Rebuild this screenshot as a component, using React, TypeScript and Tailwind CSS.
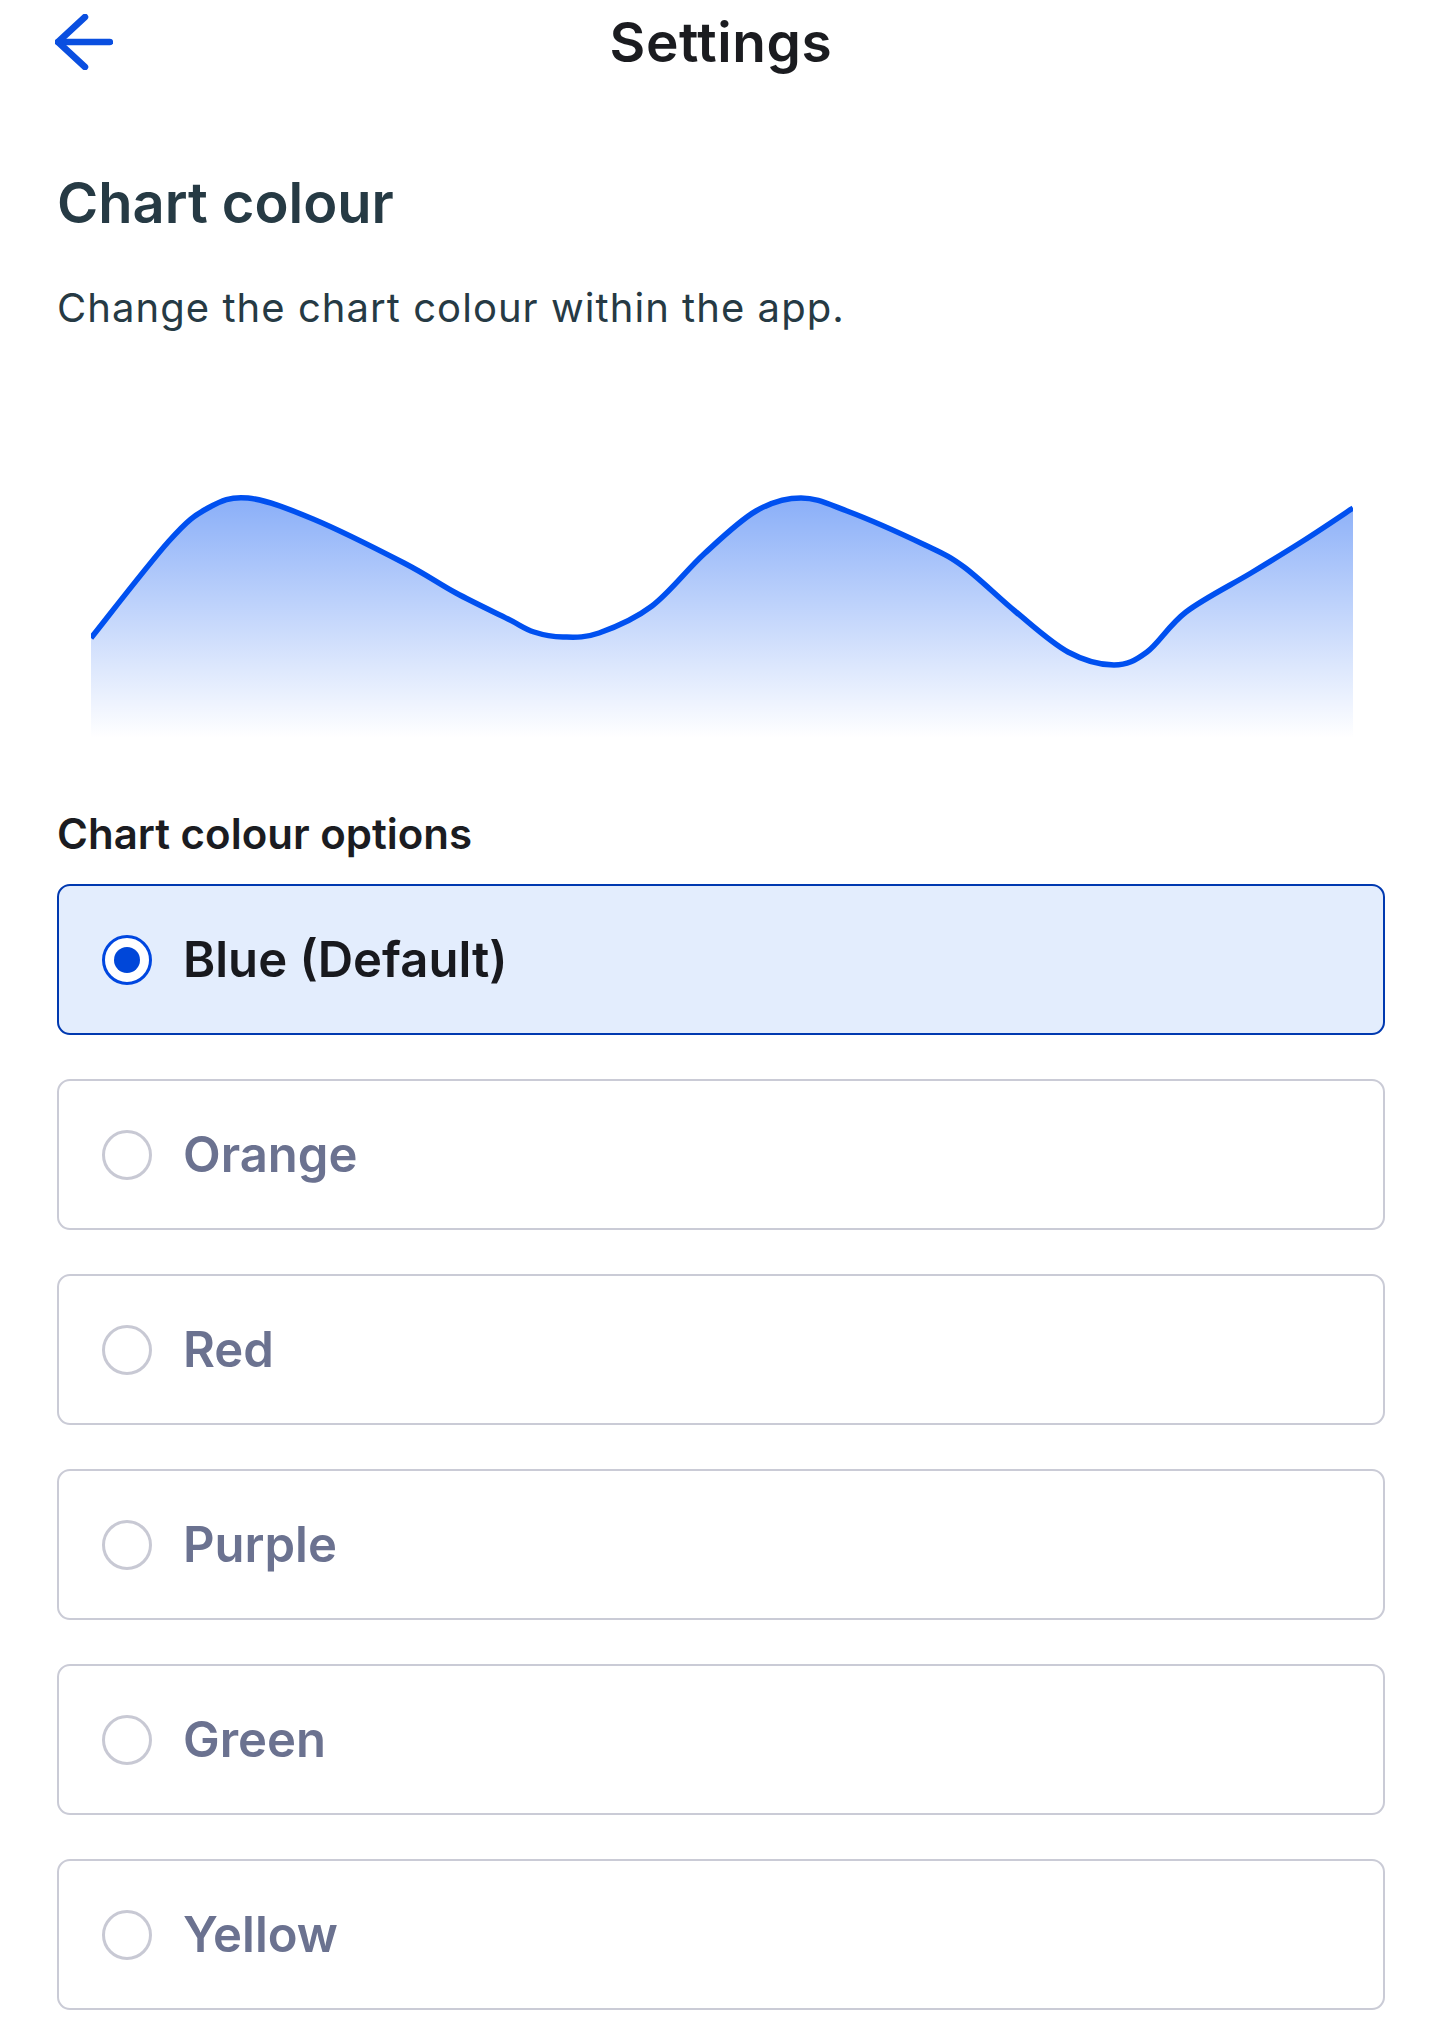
import { useState } from 'react';

const FONT = { fontFamily: 'Inter, "Noto Sans", "Liberation Sans", sans-serif' };

const OPTIONS = ['Blue (Default)', 'Orange', 'Red', 'Purple', 'Green', 'Yellow'];

// chart points in page px, shifted into the svg box below
const ORIGIN_X = 91;
const ORIGIN_Y = 480;
const RAW: [number, number][] = [
  [91, 638], [169, 541], [208, 508], [248, 498], [313, 519], [404, 563],
  [456, 593], [508, 619], [534, 632], [563, 637], [599, 633], [652, 606],
  [704, 554], [756, 511], [801, 498], [847, 511], [925, 545], [964, 567],
  [1016, 612], [1068, 652], [1114, 665], [1147, 652], [1186, 612],
  [1251, 573], [1303, 541], [1353, 508],
];
const CHART_W = 1262;
const CHART_H = 262;

function smoothPath(pts: [number, number][]) {
  let d = `M${pts[0][0]},${pts[0][1]}`;
  for (let i = 0; i < pts.length - 1; i++) {
    const p0 = pts[i - 1] ?? pts[i];
    const p1 = pts[i];
    const p2 = pts[i + 1];
    const p3 = pts[i + 2] ?? p2;
    const c1x = p1[0] + (p2[0] - p0[0]) / 6;
    const c1y = p1[1] + (p2[1] - p0[1]) / 6;
    const c2x = p2[0] - (p3[0] - p1[0]) / 6;
    const c2y = p2[1] - (p3[1] - p1[1]) / 6;
    d += ` C${c1x.toFixed(1)},${c1y.toFixed(1)} ${c2x.toFixed(1)},${c2y.toFixed(1)} ${p2[0]},${p2[1]}`;
  }
  return d;
}

function Chart() {
  const pts = RAW.map(([x, y]) => [x - ORIGIN_X, y - ORIGIN_Y] as [number, number]);
  const line = smoothPath(pts);
  const last = pts[pts.length - 1];
  const area = `${line} L${last[0]},${CHART_H} L0,${CHART_H} Z`;
  return (
    <svg width={CHART_W} height={CHART_H} viewBox={`0 0 ${CHART_W} ${CHART_H}`} className="ml-[34px] block">
      <defs>
        <linearGradient id="chartFill" gradientUnits="userSpaceOnUse" x1="0" y1="18" x2="0" y2="258">
          <stop offset="0" stopColor="#0050f0" stopOpacity="0.46" />
          <stop offset="1" stopColor="#0050f0" stopOpacity="0" />
        </linearGradient>
      </defs>
      <path d={area} fill="url(#chartFill)" />
      <path d={line} fill="none" stroke="#0050f0" strokeWidth="5.5" strokeLinejoin="round" />
    </svg>
  );
}

function Radio({ checked }: { checked: boolean }) {
  return checked ? (
    <span className="flex h-[50px] w-[50px] shrink-0 items-center justify-center rounded-full border-[3px] border-[#0047e0] bg-white">
      <span className="h-[26px] w-[26px] rounded-full bg-[#0047d9]" />
    </span>
  ) : (
    <span className="h-[50px] w-[50px] shrink-0 rounded-full border-[3px] border-[#c8c9d4] bg-white" />
  );
}

export default function App() {
  const [selected, setSelected] = useState(0);

  return (
    <div className="min-h-screen bg-white pl-[57px] pr-[55px]" style={FONT}>
      {/* Header */}
      <div className="grid h-[84px] grid-cols-[1fr_auto_1fr] items-center">
        <button className="-ml-[2px] flex items-center" aria-label="Back">
          <svg width="58" height="56" viewBox="0 0 58 56" fill="none" stroke="#0a4fe0" strokeWidth="6.5" strokeLinecap="round" strokeLinejoin="round">
            <path d="M3 28H55" />
            <path d="M30 3L3 28L30 53" />
          </svg>
        </button>
        <h1 className="text-[55px] leading-[64px] font-semibold tracking-[0.6px] text-[#1b1c20]">Settings</h1>
        <div />
      </div>

      <h2 className="mt-[85px] text-[56px] leading-[68px] font-semibold text-[#263a44]">Chart colour</h2>
      <p className="mt-[47px] text-[40px] leading-[48px] tracking-[1.05px] text-[#263a44]">
        Change the chart colour within the app.
      </p>

      <div className="mt-[148px]">
        <Chart />
      </div>

      <h3 className="mt-[67px] text-[42px] leading-[50px] font-semibold text-[#1b1c21]">Chart colour options</h3>

      <div className="mt-[25px] flex flex-col gap-[44px]">
        {OPTIONS.map((label, i) => {
          const checked = i === selected;
          return (
            <button
              key={label}
              onClick={() => setSelected(i)}
              className={
                checked
                  ? 'flex h-[151px] w-full items-center gap-[31px] rounded-[13px] border-[2.5px] border-[#0039b0] bg-[#e3edfd] pl-[43px] text-left'
                  : 'flex h-[151px] w-full items-center gap-[31px] rounded-[13px] border-[2.5px] border-[#cacbd6] bg-white pl-[43px] text-left'
              }
            >
              <Radio checked={checked} />
              <span
                className={
                  checked
                    ? 'text-[49px] leading-[60px] font-semibold text-[#18191e]'
                    : 'text-[49px] leading-[60px] font-semibold text-[#6b7290]'
                }
              >
                {label}
              </span>
            </button>
          );
        })}
      </div>
    </div>
  );
}
